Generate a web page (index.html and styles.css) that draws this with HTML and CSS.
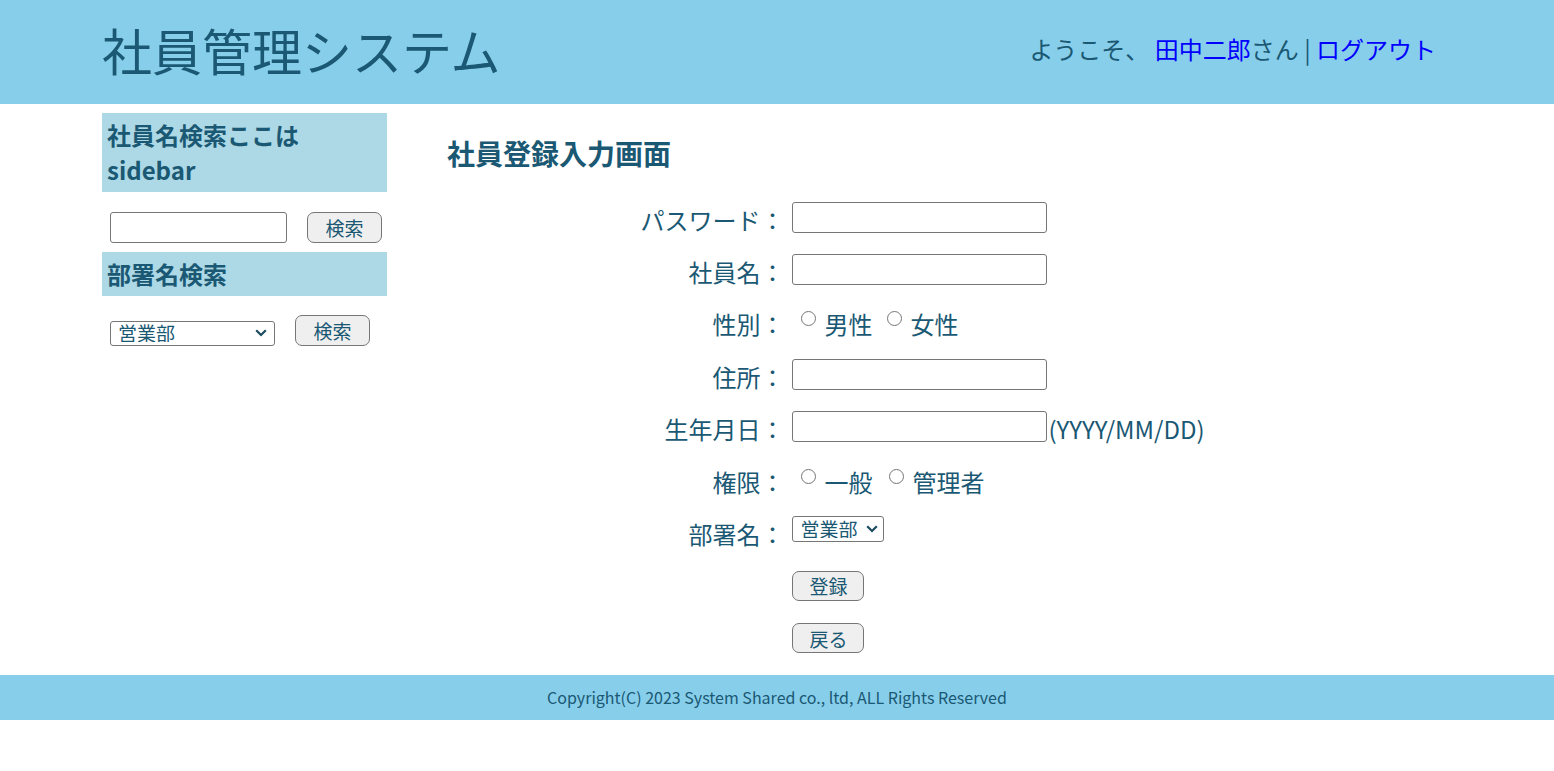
FILE: index.html
```html
<!DOCTYPE html>
<html lang="ja">
<head>
<meta charset="utf-8">
<title>社員登録入力画面</title>
<link rel="stylesheet" href="styles.css">
</head>
<body>
<header class="site-header">
  <div class="header-inner">
    <h1 class="site-title">社員管理システム</h1>
    <div class="welcome">ようこそ、 <a href="#" class="link">田中二郎</a>さん | <a href="#" class="link">ログアウト</a></div>
  </div>
</header>
<div class="wrapper">
  <aside class="sidebar">
    <h3 class="side-heading">社員名検索ここは sidebar</h3>
    <div class="side-row">
      <input type="text" class="side-input">
      <button class="btn btn-side">検索</button>
    </div>
    <h3 class="side-heading">部署名検索</h3>
    <div class="side-row side-row-select">
      <span class="select-wrap">
        <select class="select side-select"><option>営業部</option></select>
        <svg class="chev" viewBox="0 0 12 8" aria-hidden="true"><path d="M1.2 1.2 L6 6 L10.8 1.2" /></svg>
      </span>
      <button class="btn btn-side">検索</button>
    </div>
  </aside>
  <main class="main">
    <h2 class="page-title">社員登録入力画面</h2>
    <form class="reg-form">
      <label class="form-label">パスワード：</label>
      <div class="form-field"><input type="password" class="text-input"></div>

      <label class="form-label">社員名：</label>
      <div class="form-field"><input type="text" class="text-input"></div>

      <label class="form-label">性別：</label>
      <div class="form-field radio-group">
        <input type="radio" name="sex" class="radio"><span class="radio-text">男性</span>
        <input type="radio" name="sex" class="radio radio-second"><span class="radio-text">女性</span>
      </div>

      <label class="form-label">住所：</label>
      <div class="form-field"><input type="text" class="text-input"></div>

      <label class="form-label">生年月日：</label>
      <div class="form-field"><input type="text" class="text-input"><span class="hint">(YYYY/MM/DD)</span></div>

      <label class="form-label">権限：</label>
      <div class="form-field radio-group">
        <input type="radio" name="auth" class="radio"><span class="radio-text">一般</span>
        <input type="radio" name="auth" class="radio radio-second radio-wide"><span class="radio-text">管理者</span>
      </div>

      <label class="form-label">部署名：</label>
      <div class="form-field">
        <span class="select-wrap form-select-wrap">
          <select class="select form-select"><option>営業部</option></select>
          <svg class="chev" viewBox="0 0 12 8" aria-hidden="true"><path d="M1.2 1.2 L6 6 L10.8 1.2" /></svg>
        </span>
      </div>

      <span class="form-label"></span>
      <div class="form-field"><button type="button" class="btn btn-form">登録</button></div>

      <span class="form-label"></span>
      <div class="form-field"><button type="button" class="btn btn-form">戻る</button></div>
    </form>
  </main>
</div>
<footer class="site-footer">Copyright(C) 2023 System Shared co., ltd, ALL Rights Reserved</footer>
</body>
</html>
```

FILE: styles.css
```css
* { box-sizing: border-box; }

body {
  margin: 0;
  font-family: "Noto Sans CJK JP", "Noto Sans", sans-serif;
  color: #1a5873;
  background: #fff;
}

.site-header {
  background: #87ceeb;
  height: 104px;
}

.header-inner {
  width: 1350px;
  margin: 0 auto;
  height: 100%;
  display: flex;
  align-items: center;
  justify-content: space-between;
  padding-right: 16px;
  padding-bottom: 7px;
}

.site-title {
  margin: 0;
  font-size: 50px;
  font-weight: 400;
  line-height: 1;
}

.welcome {
  font-size: 24px;
}

.link {
  color: #0000ff;
  text-decoration: none;
}

.wrapper {
  width: 1350px;
  margin: 9px auto 0;
  display: flex;
}

.sidebar {
  width: 285px;
  flex: none;
}

.side-heading {
  margin: 0;
  background: #add8e6;
  font-size: 24px;
  line-height: 35px;
  padding: 4px 5px 5px;
  font-weight: 700;
}

.side-row {
  display: flex;
  align-items: center;
  padding: 20px 0 9px 8px;
  gap: 20px;
}

.side-row-select {
  padding-top: 19px;
}

.side-input {
  width: 177px;
  height: 31px;
  border: 1px solid #767676;
  border-radius: 3px;
  font-size: 19px;
}

.select-wrap {
  position: relative;
  display: inline-flex;
}

.select {
  appearance: none;
  -webkit-appearance: none;
  font-family: inherit;
  font-size: 19px;
  line-height: 1;
  color: inherit;
  border: 1px solid #767676;
  border-radius: 3px;
  background: #fff;
  margin: 0;
}

.chev {
  position: absolute;
  top: 50%;
  width: 12px;
  height: 8px;
  margin-top: -4px;
  fill: none;
  stroke: #1a4b5e;
  stroke-width: 2.2;
  pointer-events: none;
}

.side-select {
  width: 165px;
  height: 25px;
  padding: 0 0 1px 7px;
}

.side-row-select .select-wrap {
  margin-top: 5px;
}

.side-row-select .chev {
  right: 8px;
}

.btn {
  font-family: inherit;
  font-size: 19px;
  color: inherit;
  background: #efefef;
  border: 1px solid #767676;
  border-radius: 7px;
  padding: 0;
  line-height: 1;
}

.btn-side {
  width: 75px;
  height: 31px;
}

.main {
  flex: 1;
  padding: 20px 60px 0;
}

.page-title {
  margin: 0 0 20px;
  font-size: 28px;
  font-weight: 700;
}

.reg-form {
  display: grid;
  grid-template-columns: max-content max-content;
  grid-auto-rows: 52.4px;
  justify-content: center;
  column-gap: 8px;
  align-items: center;
  margin-left: 6px;
}

.form-label {
  font-size: 24px;
  text-align: right;
}

.form-field {
  display: flex;
  align-items: center;
  font-size: 24px;
}

.text-input {
  width: 255px;
  height: 31px;
  border: 1px solid #767676;
  border-radius: 3px;
  font-size: 19px;
  margin-bottom: 4px;
}

.hint {
  margin-left: 1px;
}

.radio-group {
  align-items: flex-start;
}

.radio {
  appearance: none;
  -webkit-appearance: none;
  flex: none;
  width: 15px;
  height: 15px;
  border: 1px solid #767676;
  border-radius: 50%;
  background: #fff;
  margin: 5px 8px 0 9px;
}

.radio-second {
  margin-left: 15px;
}

.radio-wide {
  margin-left: 17px;
}

.form-select-wrap {
  margin-bottom: 10px;
}

.form-select {
  width: 92px;
  height: 26px;
  padding: 0 0 1px 7px;
}

.form-select-wrap .chev {
  right: 6px;
}

.btn-form {
  width: 72px;
  height: 30px;
}

.site-footer {
  margin-top: 10px;
  background: #87ceeb;
  height: 45px;
  display: flex;
  align-items: center;
  justify-content: center;
  font-size: 16px;
}
```
